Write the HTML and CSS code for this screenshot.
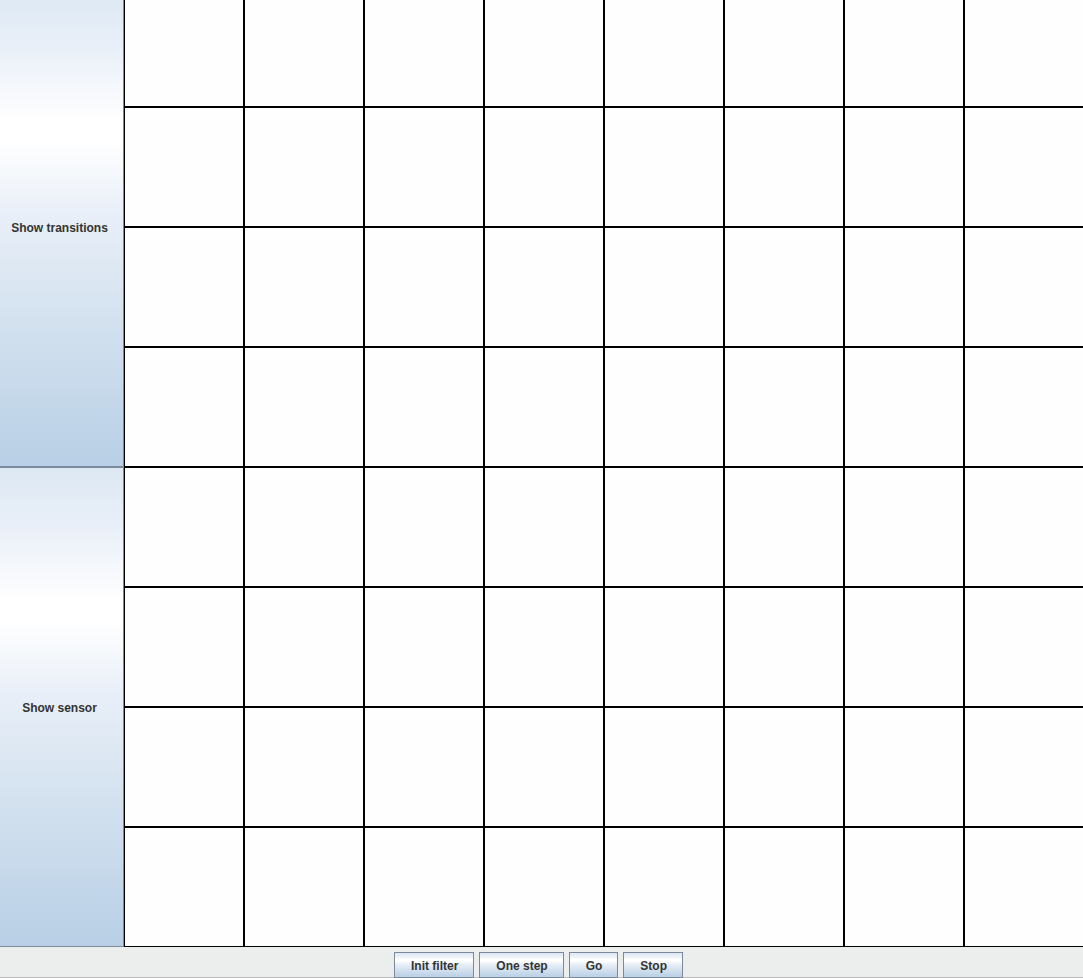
FILE: index.html
```html
<!DOCTYPE html>
<html lang="en">
<head>
<meta charset="utf-8">
<title>Localization viewer</title>
<link rel="stylesheet" href="styles.css">
</head>
<body>
<div class="app">
  <main class="workspace">
    <nav class="modes">
      <button class="button mode mode-first" type="button">Show transitions</button>
      <button class="button mode" type="button">Show sensor</button>
    </nav>
    <div class="board" id="board"></div>
  </main>
  <footer class="controls">
    <button class="button control" type="button">Init filter</button>
    <button class="button control" type="button">One step</button>
    <button class="button control" type="button">Go</button>
    <button class="button control" type="button">Stop</button>
  </footer>
</div>
<script src="board.js"></script>
</body>
</html>
```

FILE: styles.css
```css
* {
  box-sizing: border-box;
}

body {
  margin: 0;
  background: #eceeed;
  font-family: "Liberation Sans", Arial, sans-serif;
}

.app {
  display: flex;
  flex-direction: column;
  height: 100vh;
  overflow: hidden;
}

.workspace {
  display: grid;
  grid-template-columns: 124px 1fr;
  flex: 1;
  min-height: 0;
}

.modes {
  display: grid;
  grid-template-rows: 467fr 480fr;
}

.button {
  margin: 0;
  border: 1px solid #7a8a99;
  border-radius: 0;
  background: linear-gradient(#dde8f3, #e9eff8 12%, #ffffff 28%, #ffffff 32%, #e9eff8 47%, #dde8f3 59%, #b8cfe5);
  color: #333333;
  font: bold 12px/14px "Liberation Sans", Arial, sans-serif;
}

.mode {
  border-left: 0;
  padding: 2px 4px 0 0;
}

.mode-first {
  border-top: 0;
  padding-bottom: 12px;
  background: linear-gradient(#dee9f4, #e9eff8 10%, #ffffff 26%, #ffffff 30%, #e9eff8 46%, #dde8f3 58%, #b8cfe5);
}

.board {
  display: grid;
  grid-template-columns: repeat(7, 120fr) 119fr;
  grid-template-rows: 107fr repeat(7, 120fr);
}

.cell {
  border: 1px solid #000000;
  background: #fefefe;
}

.cell:nth-child(-n + 8) {
  border-top: 0;
}

.cell:nth-child(8n) {
  border-right: 0;
}

.controls {
  display: flex;
  justify-content: center;
  gap: 5px;
  padding: 5px 6px 0 0;
  box-shadow: inset 0 -1px #b8b8b8;
}

.control {
  height: 26px;
  padding: 1px 15px 0 16px;
}
```

FILE: board.js
```js
const board = document.getElementById("board");
for (let i = 0; i < 64; i++) {
  const cell = document.createElement("div");
  cell.className = "cell";
  board.append(cell);
}
```
